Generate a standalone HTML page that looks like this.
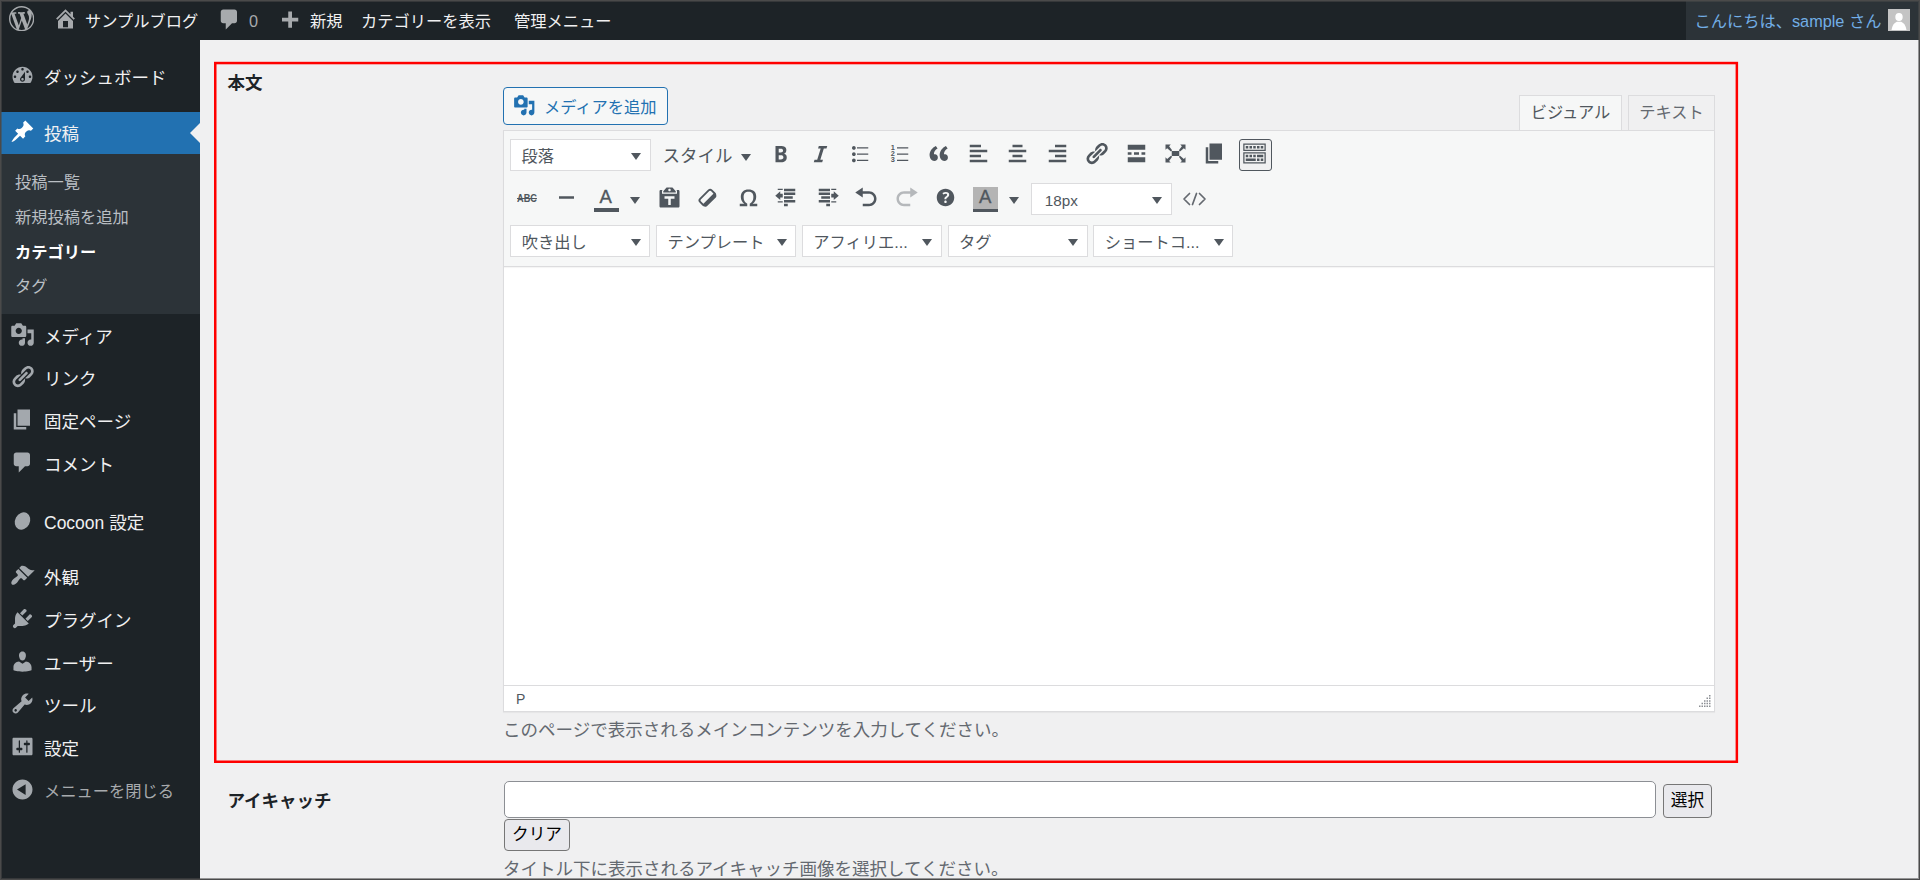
<!DOCTYPE html>
<html lang="ja">
<head>
<meta charset="utf-8">
<title>カテゴリー編集 ‹ サンプルブログ — WordPress</title>
<style>
*{box-sizing:border-box;margin:0;padding:0}
html,body{width:1920px;height:880px;overflow:hidden}
body{position:relative;background:#f0f0f1;color:#3c434a;font-family:"Liberation Sans","Noto Sans CJK JP",sans-serif;font-size:16.25px;line-height:1.4}
svg{display:block}
.abs{position:absolute}
/* outer frame */
#frame{position:absolute;left:0;top:0;width:1920px;height:880px;border:1px solid #4a4a4a;box-shadow:inset 0 0 0 1px rgba(74,74,74,.55);z-index:99;pointer-events:none}
/* admin bar */
#bar{position:absolute;left:0;top:0;width:1920px;height:40px;background:#1d2327;color:#f0f0f1;font-size:16.25px;white-space:nowrap}
#bar .t{position:absolute;top:0;height:40px;line-height:43px}
#bar svg{position:absolute;fill:#a7aaad}
#acct{position:absolute;left:1686px;top:0;width:234px;height:40px;background:#2c3338}
/* side menu */
#side{position:absolute;left:0;top:40px;width:200px;height:840px;background:#1d2327;color:#f0f0f1;white-space:nowrap}
#side .m{position:absolute;left:44px;font-size:17.5px;height:42px;line-height:44px}
#side .s{position:absolute;left:15px;font-size:16.25px;height:35px;line-height:35px;color:#b9bec3}
#side svg.i{position:absolute;left:9.75px;margin-top:-1.5px;width:25px;height:25px;fill:#a3a8ad}
#sub{position:absolute;left:0;top:114px;width:200px;height:159.5px;background:#2c3338}
#cur{position:absolute;left:0;top:72px;width:200px;height:42px;background:#2271b1}
#cur:after{content:"";position:absolute;right:0;top:11px;border:10px solid transparent;border-right-color:#f0f0f1;border-left-width:0}

/* main content */
.lbl{position:absolute;left:227.5px;font-size:17.5px;font-weight:bold;color:#1d2327;line-height:24px;white-space:nowrap}
.desc{position:absolute;left:503px;font-size:17.5px;color:#646970;line-height:24px;white-space:nowrap}
#addmedia{position:absolute;left:503px;top:87px;width:165px;height:38px;border:1px solid #2271b1;border-radius:4px;background:#f6f7f7;color:#2271b1;font-size:16.25px;line-height:36px;white-space:nowrap}
#addmedia svg{position:absolute;left:9.3px;top:6px;width:22.5px;height:22.5px;fill:#2271b1}
#addmedia span{position:absolute;left:40px;top:1px}
.tab{position:absolute;top:95px;height:37px;border:1px solid #dcdcde;background:#f0f0f1;color:#646970;font-size:16.25px;line-height:33px;text-align:center;white-space:nowrap}
.tab.on{background:#f6f7f7;color:#50575e;border-bottom-color:#f6f7f7}
#ed{position:absolute;left:503px;top:130px;width:1212px;height:582px;border:1px solid #dcdcde;background:#fff;box-shadow:0 1px 1px rgba(0,0,0,.04)}
#tb{position:absolute;left:0;top:0;width:1210px;height:136px;background:#f6f7f7;border-bottom:1px solid #dcdcde;box-shadow:0 1px 1px rgba(0,0,0,.04)}
#st{position:absolute;left:0;top:554px;width:1210px;height:26px;border-top:1px solid #dcdcde;background:#fff;font-size:15px;color:#50575e}
.sel{position:absolute;width:140px;height:31.5px;border:1px solid #dcdcde;background:#fff;color:#50575e;font-size:16.25px;line-height:31px;white-space:nowrap;overflow:hidden}
.sel span{position:absolute;left:10.5px;top:.5px}
.sel:after,.dd:after{content:"";position:absolute;border:5px solid transparent;border-top:7px solid #50575e;border-bottom-width:0}
.sel:after{right:8.5px;top:12.5px}
.dd{position:absolute;width:10px;height:7px}
.dd:after{left:0;top:0}
.ic{position:absolute;width:25px;height:25px;fill:#50575e}
#eye{position:absolute;left:503.5px;top:780.5px;width:1152px;height:37px;border:1px solid #8c8f94;border-radius:5px;background:#fff}
.nbtn{position:absolute;border:1px solid #767676;border-radius:4px;background:#e9e9ed;color:#000;font-size:16.67px;text-align:center;white-space:nowrap}
</style>
</head>
<body>

<!-- ===== ADMIN BAR ===== -->
<div id="bar">
  <svg style="left:8.800px;top:5.600px" width="25.300" height="25.300" viewBox="0 0 20 20"><path d="M20 10c0-5.51-4.49-10-10-10C4.48 0 0 4.49 0 10c0 5.52 4.48 10 10 10 5.51 0 10-4.48 10-10zM7.78 15.37L4.37 6.22c.55-.02 1.17-.08 1.17-.08.5-.06.44-1.13-.06-1.11 0 0-1.45.11-2.37.11-.18 0-.37 0-.58-.01C4.12 2.69 6.87 1.11 10 1.11c2.33 0 4.45.87 6.05 2.34-.68-.11-1.65.39-1.65 1.58 0 .74.45 1.36.9 2.1.35.61.55 1.36.55 2.46 0 1.49-1.4 5-1.4 5l-3.03-8.37c.54-.02.82-.17.82-.17.5-.05.44-1.25-.06-1.22 0 0-1.44.12-2.38.12-.87 0-2.33-.12-2.33-.12-.5-.03-.56 1.2-.06 1.22l.92.08 1.26 3.41zM17.41 10c.24-.64.74-1.87.43-4.25.7 1.29 1.05 2.71 1.05 4.25 0 3.29-1.73 6.24-4.4 7.78.97-2.59 1.94-5.2 2.92-7.78zM6.1 18.09C3.12 16.65 1.11 13.53 1.11 10c0-1.3.23-2.48.72-3.59C3.25 10.3 4.67 14.2 6.1 18.09zm4.03-6.63l2.58 6.98c-.86.29-1.76.45-2.71.45-.79 0-1.57-.11-2.29-.33.81-2.38 1.62-4.74 2.42-7.1z"/></svg>
  <svg style="left:52.5px;top:6px" width="25" height="25" viewBox="0 0 20 20"><path d="M16 8.5l1.53 1.53-1.06 1.06L10 4.62l-6.47 6.47-1.06-1.06L10 2.5l4 4v-2h2v4zm-6-2.46l6 5.99V18H4v-5.97zM12 17v-5H8v5h4z"/></svg>
  <span class="t" style="left:85px">サンプルブログ</span>
  <svg style="left:217px;top:7px" width="25" height="25" viewBox="0 0 20 20"><path d="M5 2h9c1.1 0 2 .9 2 2v7c0 1.1-.9 2-2 2h-2l-5 5v-5H5c-1.1 0-2-.9-2-2V4c0-1.1.9-2 2-2z"/></svg>
  <span class="t" style="left:249px;color:#a7aaad">0</span>
  <svg style="left:277px;top:8.5px" width="25" height="25" viewBox="0 0 20 20"><path d="M17 7v3h-5v5H9v-5H4V7h5V2h3v5h5z"/></svg>
  <span class="t" style="left:310px">新規</span>
  <span class="t" style="left:361px">カテゴリーを表示</span>
  <span class="t" style="left:514px">管理メニュー</span>
  <div id="acct">
    <span class="t" style="left:8.5px;color:#72aee6">こんにちは、sample さん</span>
    <svg style="left:202px;top:9px;fill:none" width="22" height="22" viewBox="0 0 22 22"><rect width="22" height="22" fill="#c4c4c4"/><ellipse cx="11" cy="8" rx="3.700" ry="4" fill="#fff"/><path d="M3.500 21c.800-4.500 2.500-7 5.300-8.200h4.400c2.800 1.200 4.500 3.700 5.300 8.200z" fill="#fff"/></svg>
  </div>
</div>

<!-- ===== SIDE MENU ===== -->
<div id="side">
  <div id="cur"></div>
  <div id="sub"></div>
  <svg class="i" style="top:24px;" viewBox="0 0 20 20"><path d="M3.76 16h12.48c1.1-1.37 1.76-3.11 1.76-5 0-4.42-3.58-8-8-8s-8 3.58-8 8c0 1.89.66 3.63 1.76 5zM10 4c.55 0 1 .45 1 1s-.45 1-1 1-1-.45-1-1 .45-1 1-1zM6 6c.55 0 1 .45 1 1s-.45 1-1 1-1-.45-1-1 .45-1 1-1zm8 0c.55 0 1 .45 1 1s-.45 1-1 1-1-.45-1-1 .45-1 1-1zm-5.37 5.55L12 7v6c0 1.1-.9 2-2 2s-2-.9-2-2c0-.57.24-1.08.63-1.45zM4 10c.55 0 1 .45 1 1s-.45 1-1 1-1-.45-1-1 .45-1 1-1zm12 0c.55 0 1 .45 1 1s-.45 1-1 1-1-.45-1-1 .45-1 1-1zm-5 3c0-.55-.45-1-1-1s-1 .45-1 1 .45 1 1 1 1-.45 1-1z"/></svg>
  <div class="m" style="top:16px">ダッシュボード</div>
  <svg class="i" style="top:80px;fill:#fff" viewBox="0 0 20 20"><path d="M10.44 3.02l1.82-1.82 6.36 6.35-1.83 1.82c-1.05-.68-2.48-.57-3.41.36l-.75.75c-.92.93-1.04 2.35-.35 3.41l-1.83 1.82-2.41-2.41-2.8 2.79c-.42.42-3.38 2.71-3.8 2.29s1.86-3.39 2.28-3.81l2.79-2.79L4.1 9.36l1.83-1.82c1.05.69 2.48.57 3.4-.36l.75-.75c.93-.92 1.05-2.35.36-3.41z"/></svg>
  <div class="m" style="top:72px">投稿</div>
  <svg class="i" style="top:283px;" viewBox="0 0 20 20"><path d="M13 11V4c0-.55-.45-1-1-1h-1.67L9 1H5L3.67 3H2c-.55 0-1 .45-1 1v7c0 .55.45 1 1 1h10c.55 0 1-.45 1-1zM7 4.5c1.38 0 2.5 1.12 2.5 2.5S8.38 9.5 7 9.5 4.5 8.38 4.5 7 5.62 4.5 7 4.5zM14 6h5v10.5c0 1.38-1.12 2.5-2.5 2.5S14 17.88 14 16.5s1.12-2.5 2.5-2.5c.17 0 .34.02.5.05V9h-3V6zm-4 8.05V13h2v3.5c0 1.38-1.12 2.5-2.5 2.5S7 17.88 7 16.5 8.12 14 9.5 14c.17 0 .34.02.5.05z"/></svg>
  <div class="m" style="top:275px">メディア</div>
  <svg class="i" style="top:325px;" viewBox="0 0 20 20"><path d="M17.74 2.76c1.68 1.69 1.68 4.41 0 6.1l-1.53 1.52c-1.12 1.12-2.7 1.47-4.14 1.09l2.62-2.61.76-.77.76-.76c.84-.84.84-2.2 0-3.04-.84-.85-2.2-.85-3.04 0l-.77.76-3.38 3.38c-.37-1.44-.02-3.02 1.1-4.14l1.52-1.53c1.69-1.68 4.42-1.68 6.1 0zM8.59 13.43l5.34-5.34c.42-.42.42-1.1 0-1.52-.44-.43-1.13-.39-1.53 0l-5.33 5.34c-.42.42-.42 1.1 0 1.52.44.43 1.13.39 1.52 0zm-.76 2.29l4.14-4.15c.38 1.44.03 3.02-1.09 4.14l-1.52 1.53c-1.69 1.68-4.41 1.68-6.1 0-1.68-1.68-1.68-4.42 0-6.1l1.53-1.52c1.12-1.12 2.7-1.47 4.14-1.1l-4.14 4.15c-.85.84-.85 2.2 0 3.05.84.84 2.2.84 3.04 0z"/></svg>
  <div class="m" style="top:317px">リンク</div>
  <svg class="i" style="top:368px;" viewBox="0 0 20 20"><path d="M6 15V2h10v13H6zm-1 1h8v2H3V5h2v11z"/></svg>
  <div class="m" style="top:360px">固定ページ</div>
  <svg class="i" style="top:411px;" viewBox="0 0 20 20"><path d="M5 2h9c1.1 0 2 .9 2 2v7c0 1.1-.9 2-2 2h-2l-5 5v-5H5c-1.1 0-2-.9-2-2V4c0-1.1.9-2 2-2z"/></svg>
  <div class="m" style="top:403px">コメント</div>
  <svg class="i" style="top:469px" viewBox="0 0 20 20"><ellipse cx="10" cy="10.400" rx="5.900" ry="7.200" transform="rotate(28 10 10.400)"/></svg>
  <div class="m" style="top:461px">Cocoon 設定</div>
  <svg class="i" style="top:524px;" viewBox="0 0 20 20"><path d="M14.48 11.06L7.41 3.99l1.5-1.5c.5-.56 2.3-.47 3.51.32 1.21.8 1.43 1.28 2.91 2.1 1.18.64 2.45 1.26 4.45.85zm-.71.71L6.7 4.7 4.93 6.47c-.39.39-.39 1.02 0 1.41l1.06 1.06c.39.39.39 1.03 0 1.42-.6.6-1.43 1.11-2.21 1.69-.35.26-.7.53-1.01.84C1.43 14.23.4 16.08 1.4 17.07c.99 1 2.84-.03 4.18-1.36.31-.31.58-.66.85-1.02.57-.78 1.08-1.61 1.69-2.21.39-.39 1.02-.39 1.41 0l1.06 1.06c.39.39 1.02.39 1.41 0z"/></svg>
  <div class="m" style="top:516px">外観</div>
  <svg class="i" style="top:567px;" viewBox="0 0 20 20"><path d="M13.11 4.36L9.87 7.6 8 5.73l3.24-3.24c.35-.34 1.05-.2 1.56.32.52.51.66 1.21.31 1.55zm-8 1.77l.91-1.12 9.01 9.01-1.19.84c-.71.71-2.63 1.16-3.82 1.16H6.14L4.9 17.26c-.59.59-1.54.59-2.12 0-.59-.58-.59-1.53 0-2.12l1.24-1.24v-3.88c0-1.13.4-3.19 1.09-3.89zm7.26 3.97l3.24-3.24c.34-.35 1.04-.21 1.55.31.52.51.66 1.21.31 1.55l-3.24 3.25z"/></svg>
  <div class="m" style="top:559px">プラグイン</div>
  <svg class="i" style="top:610px;" viewBox="0 0 20 20"><path d="M10 9.25c-2.27 0-2.73-3.44-2.73-3.44C7 4.02 7.82 2 9.97 2c2.16 0 2.98 2.02 2.71 3.81 0 0-.41 3.44-2.68 3.44zm0 2.57L12.72 10c2.39 0 4.52 2.33 4.52 4.53v2.49s-3.65 1.13-7.24 1.13c-3.65 0-7.24-1.13-7.24-1.13v-2.49c0-2.25 1.94-4.48 4.47-4.48z"/></svg>
  <div class="m" style="top:602px">ユーザー</div>
  <svg class="i" style="top:652px;" viewBox="0 0 20 20"><path d="M16.68 9.77c-1.34 1.34-3.3 1.67-4.95.99l-5.41 6.52c-.99.99-2.59.99-3.58 0s-.99-2.59 0-3.57l6.52-5.42c-.68-1.65-.35-3.61.99-4.95 1.28-1.28 3.12-1.62 4.72-1.06l-2.89 2.89 2.82 2.82 2.86-2.87c.53 1.58.18 3.39-1.08 4.65zM3.81 16.21c.4.39 1.04.39 1.43 0 .4-.4.4-1.04 0-1.43-.39-.4-1.03-.4-1.43 0-.39.39-.39 1.03 0 1.43z"/></svg>
  <div class="m" style="top:644px">ツール</div>
  <svg class="i" style="top:695px;" viewBox="0 0 20 20"><path d="M18 16V4c0-.55-.45-1-1-1H3c-.55 0-1 .45-1 1v12c0 .55.45 1 1 1h14c.55 0 1-.45 1-1zM8 11h1c.55 0 1 .45 1 1s-.45 1-1 1H8v1.5c0 .28-.22.5-.5.5s-.5-.22-.5-.5V13H6c-.55 0-1-.45-1-1s.45-1 1-1h1V5.5c0-.28.22-.5.5-.5s.5.22.5.5V11zm5-2h-1c-.55 0-1-.45-1-1s.45-1 1-1h1V5.5c0-.28.22-.5.5-.5s.5.22.5.5V7h1c.55 0 1 .45 1 1s-.45 1-1 1h-1v5.5c0 .28-.22.5-.5.5s-.5-.22-.5-.5V9z"/></svg>
  <div class="m" style="top:687px">設定</div>
  <svg class="i" style="top:738px;" viewBox="0 0 20 20"><path d="M10 2.02c-4.42 0-8 3.58-8 8s3.58 8 8 8 8-3.58 8-8-3.58-8-8-8zM12.500 14.300l-6.900-4.300 6.900-4.300z"/></svg>
  <div class="m" style="top:730px;color:#a7aaad;font-size:16.25px;line-height:42.500px">メニューを閉じる</div>
  <div class="s" style="top:124.5px;">投稿一覧</div>
  <div class="s" style="top:159.5px;">新規投稿を追加</div>
  <div class="s" style="top:194.5px;color:#fff;font-weight:bold">カテゴリー</div>
  <div class="s" style="top:229px;">タグ</div>
</div>

<!-- ===== CONTENT ===== -->

<div id="main">
  <svg id="red" class="abs" style="left:0;top:0" width="1920" height="880"><rect x="215.250" y="63.050" width="1521.600" height="698.700" fill="none" stroke="#f00" stroke-width="2.500"/></svg>
  <div class="lbl" style="top:71px">本文</div>
  <div id="addmedia"><svg width="25" height="25" viewBox="0 0 20 20"><path d="M13 11V4c0-.55-.45-1-1-1h-1.67L9 1H5L3.67 3H2c-.55 0-1 .45-1 1v7c0 .55.45 1 1 1h10c.55 0 1-.45 1-1zM7 4.5c1.38 0 2.5 1.12 2.5 2.5S8.38 9.5 7 9.5 4.500 8.380 4.500 7 5.620 4.500 7 4.500zM14 6h5v10.500c0 1.380-1.120 2.500-2.500 2.500S14 17.880 14 16.500s1.120-2.500 2.500-2.500c.170 0 .340.020.500.050V9h-3V6zm-4 8.050V13h2v3.500c0 1.380-1.120 2.500-2.500 2.500S7 17.880 7 16.500 8.120 14 9.500 14c.170 0 .340.020.500.050z"/></svg><span>メディアを追加</span></div>
  <div class="tab on" style="left:1519px;width:103px">ビジュアル</div>
  <div class="tab" style="left:1628px;width:87px">テキスト</div>
  <div id="ed">
    <div id="tb">
      <div class="sel" style="left:6px;top:8.25px;width:140.5px"><span>段落</span></div>
      <span class="abs" style="left:158.5px;top:12.500px;font-size:17.5px;line-height:25px;color:#50575e;white-space:nowrap">スタイル</span><i class="dd" style="left:237px;top:22.500px"></i>
      <div class="abs" style="left:734.5px;top:8px;width:33.5px;height:31.75px;border:1px solid #50575e;border-radius:3px;background:#f0f0f1"></div>
      <svg class="ic" style="left:264px;top:9.75px;" viewBox="0 0 20 20"><path d="M6 4v13h4.54c1.37 0 2.46-.33 3.26-1 .8-.66 1.2-1.58 1.2-2.77 0-.84-.17-1.51-.51-2.01s-.9-.85-1.67-1.03v-.09c.57-.1 1.02-.4 1.36-.9s.51-1.13.51-1.91c0-1.14-.39-1.98-1.17-2.5C12.75 4.26 11.5 4 9.78 4H6zm2.57 5.15V6.26h1.36c.73 0 1.27.11 1.61.32.34.22.51.58.51 1.07 0 .54-.16.92-.47 1.15s-.82.35-1.51.35h-1.5zm0 2.19h1.6c1.44 0 2.16.53 2.16 1.61 0 .6-.17 1.05-.51 1.34s-.86.43-1.57.43H8.57v-3.38z"/></svg>
      <svg class="ic" style="left:303.5px;top:9.75px;" viewBox="0 0 20 20"><path d="M14.78 6h-2.13l-2.8 9h2.12l-.62 2H4.6l.62-2h2.14l2.8-9H8.03l.62-2h6.75z"/></svg>
      <svg class="ic" style="left:343px;top:9.75px;" viewBox="0 0 20 20"><path d="M5.5 7C4.67 7 4 6.33 4 5.5 4 4.68 4.67 4 5.5 4 6.32 4 7 4.68 7 5.5 7 6.33 6.32 7 5.5 7zM8 5h9v1H8V5zm-2.5 7c-.83 0-1.5-.67-1.5-1.5C4 9.68 4.67 9 5.5 9c.82 0 1.5.68 1.5 1.5 0 .83-.68 1.5-1.5 1.5zM8 10h9v1H8v-1zm-2.5 7c-.83 0-1.5-.67-1.5-1.5 0-.82.67-1.5 1.5-1.5.82 0 1.5.68 1.5 1.5 0 .83-.68 1.5-1.5 1.5zM8 15h9v1H8v-1z"/></svg>
      <svg class="ic" style="left:382.5px;top:9.75px;" viewBox="0 0 20 20"><path d="M8 5h9v1H8zM8 10h9v1H8zM8 15h9v1H8z"/><text x="2.900" y="6.900" font-size="5.900" font-weight="bold" font-family="Liberation Sans,sans-serif">1</text><text x="2.900" y="11.900" font-size="5.900" font-weight="bold" font-family="Liberation Sans,sans-serif">2</text><text x="2.900" y="16.900" font-size="5.900" font-weight="bold" font-family="Liberation Sans,sans-serif">3</text></svg>
      <svg class="ic" style="left:422px;top:9.75px;" viewBox="0 0 20 20"><path d="M9.49 13.22c0-.74-.2-1.38-.61-1.9-.62-.78-1.83-.88-2.53-.72-.29-1.65 1.11-3.75 2.92-4.65L7.88 4c-2.73 1.3-5.42 4.28-4.96 8.05C3.21 14.43 4.59 16 6.54 16c.85 0 1.56-.25 2.12-.75s.83-1.18.83-2.03zm8.05 0c0-.74-.2-1.38-.61-1.9-.63-.78-1.83-.88-2.53-.72-.29-1.65 1.11-3.75 2.92-4.65L15.93 4c-2.73 1.3-5.41 4.28-4.95 8.05.29 2.38 1.66 3.95 3.61 3.95.85 0 1.56-.25 2.12-.75s.83-1.18.83-2.03z"/></svg>
      <svg class="ic" style="left:461.5px;top:9.75px;" viewBox="0 0 20 20"><path d="M12 5V3H3v2h9zm5 4V7H3v2h14zm-5 4v-2H3v2h9zm5 4v-2H3v2h14z"/></svg>
      <svg class="ic" style="left:501px;top:9.75px;" viewBox="0 0 20 20"><path d="M14 5V3H6v2h8zm3 4V7H3v2h14zm-3 4v-2H6v2h8zm3 4v-2H3v2h14z"/></svg>
      <svg class="ic" style="left:540.5px;top:9.75px;" viewBox="0 0 20 20"><path d="M17 5V3H8v2h9zm0 4V7H3v2h14zm0 4v-2H8v2h9zm0 4v-2H3v2h14z"/></svg>
      <svg class="ic" style="left:580px;top:9.75px;" viewBox="0 0 20 20"><path d="M17.74 2.76c1.68 1.69 1.68 4.41 0 6.1l-1.53 1.52c-1.12 1.12-2.7 1.47-4.14 1.09l2.62-2.61.76-.77.76-.76c.84-.84.84-2.2 0-3.04-.84-.85-2.2-.85-3.04 0l-.77.76-3.38 3.38c-.37-1.44-.02-3.02 1.1-4.14l1.52-1.53c1.69-1.68 4.42-1.68 6.1 0zM8.59 13.43l5.34-5.34c.42-.42.42-1.1 0-1.52-.44-.43-1.13-.39-1.53 0l-5.33 5.34c-.42.42-.42 1.1 0 1.52.44.43 1.13.39 1.52 0zm-.76 2.29l4.14-4.15c.38 1.44.03 3.02-1.09 4.14l-1.52 1.53c-1.69 1.68-4.41 1.68-6.1 0-1.68-1.68-1.68-4.42 0-6.1l1.53-1.52c1.12-1.12 2.7-1.47 4.14-1.1l-4.14 4.15c-.85.84-.85 2.2 0 3.05.84.84 2.2.84 3.04 0z"/></svg>
      <svg class="ic" style="left:619.5px;top:9.75px;" viewBox="0 0 20 20"><path d="M17 7V3H3v4h14zM6 11V9H3v2h3zm6 0V9H8v2h4zm5 0V9h-3v2h3zm0 6v-4H3v4h14z"/></svg>
      <svg class="ic" style="left:659px;top:9.75px;" viewBox="0 0 20 20"><path d="M7 8h6v4H7z M2 2.800h4.200L4.900 4.100 7.300 7.400 6.400 8.300 3.300 5.700 2 7z M18 2.800v4.200l-1.300-1.300-3.100 2.600-.9-.9 2.400-3.300L13.800 2.800z M2 17.200V13l1.300 1.300 3.100-2.600.9.900-2.400 3.300 1.300 1.300z M18 17.200h-4.200l1.300-1.300-2.400-3.300.9-.9 3.100 2.600L18 13z"/></svg>
      <svg class="ic" style="left:698px;top:9.75px;" viewBox="0 0 20 20"><path d="M6 15V2h10v13H6zm-1 1h8v2H3V5h2v11z"/></svg>
      <svg class="ic" style="left:738px;top:9.75px;" viewBox="0 0 20 20"><path d="M19 2v6H1V2h18zm-1 5V3H2v4h16zM5 4v2H3V4h2zm3 0v2H6V4h2zm3 0v2H9V4h2zm3 0v2h-2V4h2zm3 0v2h-2V4h2zm2 5v9H1V9h18zm-1 8v-7H2v7h16zM5 11v2H3v-2h2zm3 0v2H6v-2h2zm3 0v2H9v-2h2zm6 0v2h-5v-2h5zm-6 3v2H3v-2h8zm3 0v2h-2v-2h2zm3 0v2h-2v-2h2z"/></svg>
      <span class="abs" style="left:13px;top:58.500px;font-size:11.500px;font-weight:bold;line-height:16px;color:#50575e;transform:scaleX(.8);transform-origin:0 0;text-decoration:line-through;text-decoration-thickness:1.200px">ABC</span>
      <svg class="ic" style="left:49.5px;top:54px;" viewBox="0 0 20 20"><path d="M4 9h12v2H4z"/></svg>
      <span class="abs" style="left:95.5px;top:54px;font-size:18.500px;line-height:24px;color:#50575e;-webkit-text-stroke:.35px #50575e">A</span><div class="abs" style="left:90px;top:77px;width:25px;height:3.750px;background:#50575e"></div><i class="dd" style="left:126px;top:66px"></i>
      <svg class="ic" style="left:152.5px;top:54px;" viewBox="0 0 20 20"><path d="M12.380 2L15 5v1H5V5l2.640-3h4.740zM10 5c.550 0 1-.440 1-1 0-.550-.450-1-1-1s-1 .450-1 1c0 .560.450 1 1 1zm5.450-1H17c.550 0 1 .450 1 1v12c0 .560-.450 1-1 1H3c-.550 0-1-.440-1-1V5c0-.550.450-1 1-1h1.550L4 4.630V7h12V4.630zM14 11V9H6v2h3v5h2v-5h3z"/></svg>
      <svg class="ic" style="left:191px;top:54px;" viewBox="0 0 20 20"><g transform="rotate(-45 10 10.2)"><rect x="3.5" y="6.700" width="13" height="6.600" rx="1.700" fill="none" stroke="#50575e" stroke-width="1.500"/><path d="M3.500 11.200h13v1.900c0 .900-.700 1.600-1.600 1.600H5.100c-.900 0-1.600-.700-1.600-1.600z"/></g></svg>
      <svg class="ic" style="left:231.5px;top:54px;" viewBox="0 0 20 20"><path d="M10 5.400c1.270 0 2.240.360 2.910 1.080.660.710 1 1.760 1 3.130 0 1.280-.230 2.370-.690 3.270-.470.890-1.270 1.520-2.220 2.120v2h6v-2h-3.690c.920-.640 1.620-1.340 2.120-2.340.490-1.010.740-2.130.740-3.350 0-1.780-.550-3.190-1.650-4.220S11.920 3.540 10 3.540s-3.430.530-4.520 1.570c-1.100 1.040-1.650 2.440-1.650 4.200 0 1.210.240 2.310.730 3.330.480 1.010 1.190 1.710 2.100 2.360H3v2h6v-2c-.980-.640-1.800-1.280-2.240-2.170-.450-.890-.670-1.960-.670-3.220 0-1.370.330-2.410 1-3.130C7.750 5.760 8.720 5.400 10 5.400z"/></svg>
      <svg class="ic" style="left:269.5px;top:54px;" viewBox="0 0 20 20"><path d="M7 4V3H3v1h4zm10 1V3H8v2h9zM7 7H5V5L1 8.5 5 12v-2h2V7zm10 1V6H8v2h9zm-2 3V9H8v2h7zm2 3v-2H8v2h9zM7 14v-1H3v1h4zm4 3v-2H8v2h3z"/></svg>
      <svg class="ic" style="left:310.5px;top:54px;" viewBox="0 0 20 20"><path d="M3 5V3h9v2H3zm10-1V3h4v1h-4zm0 3h2V5l4 3.5-4 3.5v-2h-2V7zM3 8V6h9v2H3zm2 3V9h7v2H5zm-2 3v-2h9v2H3zm10 0v-1h4v1h-4zm-4 3v-2h3v2H9z"/></svg>
      <svg class="ic" style="left:349.5px;top:54px;" viewBox="0 0 20 20"><path d="M12 5H7V2L1 6l6 4V7h5c2.200 0 4 1.800 4 4s-1.800 4-4 4H7v2h5c3.300 0 6-2.700 6-6s-2.700-6-6-6z"/></svg>
      <svg class="ic" style="left:389.5px;top:54px;fill:#b5b8bb" viewBox="0 0 20 20"><path d="M8 5h5V2l6 4-6 4V7H8c-2.200 0-4 1.800-4 4s1.800 4 4 4h5v2H8c-3.300 0-6-2.700-6-6s2.700-6 6-6z"/></svg>
      <svg class="ic" style="left:429px;top:54px;" viewBox="0 0 20 20"><path d="M17 10c0-3.870-3.140-7-7-7-3.870 0-7 3.130-7 7s3.130 7 7 7c3.860 0 7-3.130 7-7zm-6.300 1.480H9.140v-.430c0-.380.080-.700.240-.980s.460-.570.880-.890c.410-.290.680-.530.810-.710.140-.180.200-.390.200-.620 0-.250-.090-.440-.280-.580-.190-.130-.450-.190-.790-.190-.580 0-1.250.190-2 .570l-.640-1.280c.870-.490 1.800-.740 2.770-.740.810 0 1.450.200 1.920.580.480.390.710.910.710 1.550 0 .430-.090.800-.290 1.110-.190.320-.570.670-1.110 1.060-.380.280-.610.490-.710.630-.1.150-.150.340-.150.570v.350zm-1.470 2.740c-.180-.170-.270-.420-.270-.730 0-.330.080-.580.260-.750s.430-.250.770-.250c.320 0 .570.090.750.260s.270.420.270.740c0 .300-.090.550-.270.720-.180.180-.430.270-.750.270-.330 0-.580-.090-.760-.260z"/></svg>
      <div class="abs" style="left:469px;top:55.75px;width:25px;height:25px;background:#b4b4b4;border-bottom:3.750px solid #50575e"></div><span class="abs" style="left:475px;top:54px;font-size:18.500px;line-height:24px;color:#50575e;-webkit-text-stroke:.35px #50575e">A</span><i class="dd" style="left:505px;top:66px"></i>
      <div class="sel" style="left:527.25px;top:52px;width:140.500px"><span style="left:12.500px;font-size:15.250px">18px</span></div>
      <svg class="abs" style="left:678px;top:60px" width="25" height="16" viewBox="0 0 25 16" fill="none" stroke="#646970" stroke-width="1.700" stroke-linecap="round" stroke-linejoin="round"><path d="M7.500 2.500L2 8l5.500 5.500M17.500 2.500L23 8l-5.500 5.500M14.500 2.500l-4 11"/></svg>
      <div class="sel" style="left:6.25px;top:94px"><span>吹き出し</span></div>
      <div class="sel" style="left:152px;top:94px"><span>テンプレート</span></div>
      <div class="sel" style="left:297.75px;top:94px"><span>アフィリエ...</span></div>
      <div class="sel" style="left:443.5px;top:94px"><span>タグ</span></div>
      <div class="sel" style="left:589.25px;top:94px"><span>ショートコ...</span></div>
    </div>
    <div id="st"><span class="abs" style="left:12px;top:3px;line-height:20px;font-size:14px">P</span>
      <svg class="abs" style="right:3px;bottom:3px" width="13" height="13" viewBox="0 0 13 13" fill="#8c8f94"><path d="M11 0h1.500v1.500H11zM8.500 2.600H10v1.500H8.500zM11 2.600h1.500v1.500H11zM6 5.200h1.500v1.500H6zM8.500 5.200H10v1.500H8.500zM11 5.200h1.500v1.500H11zM3.500 7.800H5v1.500H3.500zM6 7.800h1.500v1.500H6zM8.500 7.800H10v1.500H8.500zM11 7.800h1.500v1.500H11zM1 10.400h1.500v1.500H1zM3.500 10.400H5v1.500H3.500zM6 10.400h1.500v1.500H6zM8.500 10.400H10v1.500H8.500zM11 10.400h1.500v1.500H11z"/></svg>
    </div>
  </div>
  <div class="desc" style="top:718px">このページで表示されるメインコンテンツを入力してください。</div>
  <div class="lbl" style="top:789px">アイキャッチ</div>
  <div id="eye"></div>
  <div class="nbtn" style="left:1663px;top:784px;width:49px;height:33.5px;line-height:31px">選択</div>
  <div class="nbtn" style="left:504px;top:819px;width:66px;height:32px;line-height:29px">クリア</div>
  <div class="desc" style="top:857px">タイトル下に表示されるアイキャッチ画像を選択してください。</div>
</div>

<div id="frame"></div>
</body>
</html>
